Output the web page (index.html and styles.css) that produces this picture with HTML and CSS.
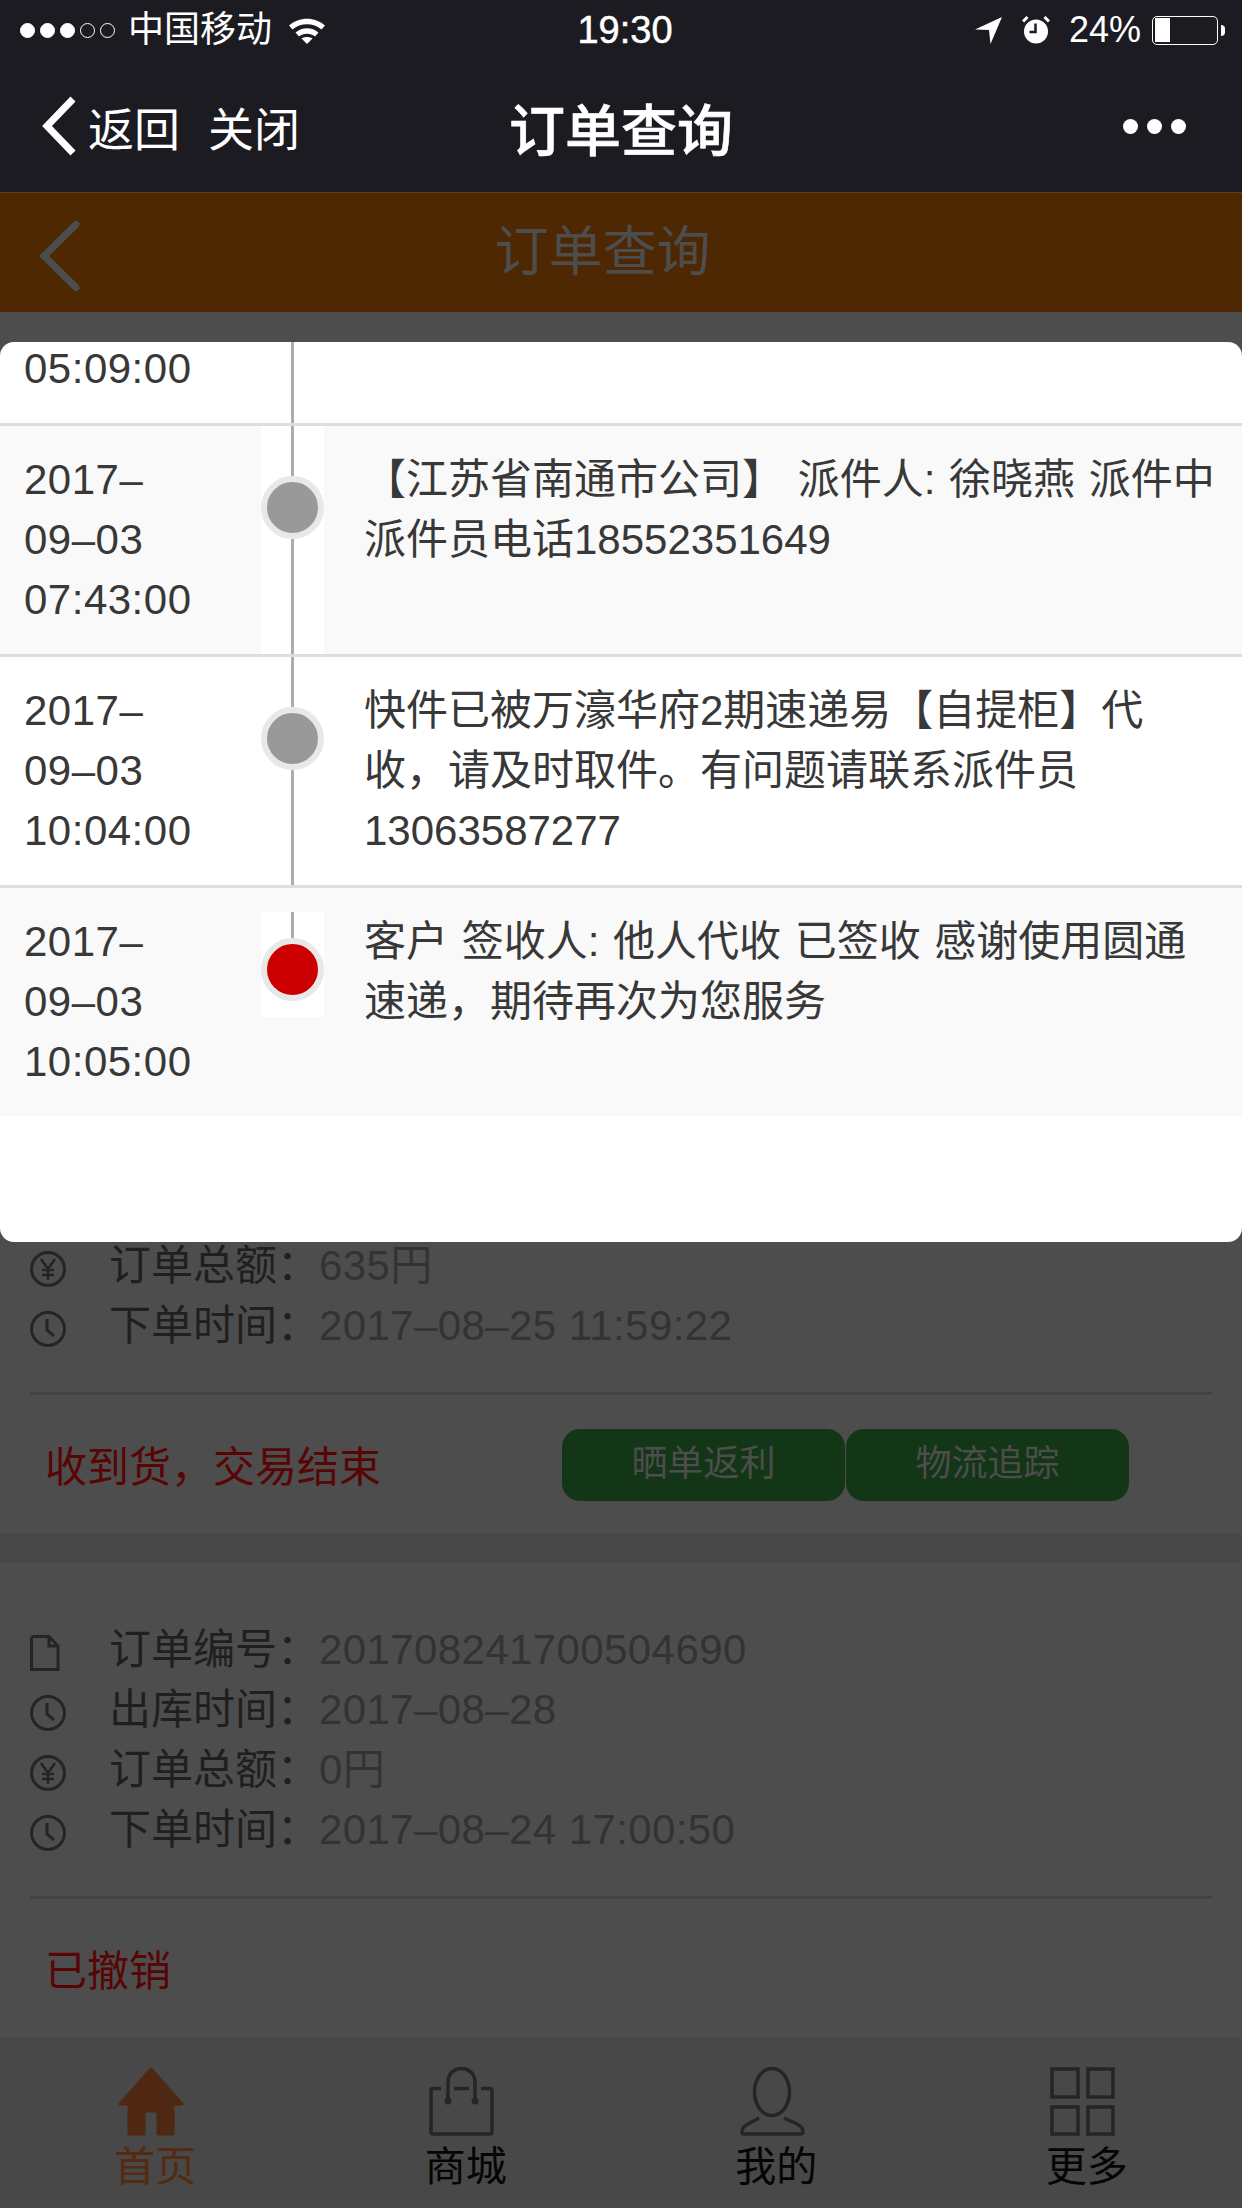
FILE: index.html
```html
<!DOCTYPE html>
<html lang="zh-CN">

<head>
    <meta charset="UTF-8">
    <meta name="viewport" content="width=device-width, initial-scale=1.0">
    <title>订单查询</title>
    <link rel="stylesheet" href="styles.css">
</head>

<body>
    <div class="page">
        <div class="statusbar">
            <div class="status_left">
                <div class="signal">
                    <span class="on"></span><span class="on"></span><span class="on"></span><span></span><span></span>
                </div>
                <span class="carrier">中国移动</span>
                <svg class="wifi" width="38" height="27" viewBox="0 0 38 27">
                    <path d="M1 8.5C11 -0.5 27 -0.5 37 8.5L33.5 12.5C25.500 5.500 12.500 5.500 4.500 12.500Z" fill="#fff" />
                    <path d="M7.500 15.500C14 9.800 24 9.800 30.500 15.500L27 19.500C22.500 15.800 15.500 15.800 11 19.500Z" fill="#fff" />
                    <path d="M13.500 21.500C16.500 19.500 21.500 19.500 24.500 21.500L19 27Z" fill="#fff" />
                </svg>
            </div>
            <div class="clock">19:30</div>
            <div class="status_right">
                <svg width="27" height="27" viewBox="0 0 27 27">
                    <path d="M27 0L15.500 27L14 13L0 12.500Z" fill="#fff" />
                </svg>
                <svg class="alarm" width="28" height="28" viewBox="0 0 28 28">
                    <circle cx="14" cy="15.500" r="12" fill="#fff" />
                    <path d="M13.500 7.500V16H7.500" fill="none" stroke="#1b1b21" stroke-width="2.500" />
                    <path d="M1 5.500L5.500 1M22.500 1L27 5.500" stroke="#fff" stroke-width="3" />
                </svg>
                <span class="percent">24%</span>
                <div class="battery">
                    <div class="battery_fill"></div>
                </div>
                <div class="battery_tip"></div>
            </div>
        </div>

        <div class="nav">
            <div class="nav_left">
                <svg width="34" height="60" viewBox="0 0 34 60">
                    <path d="M31 3L5 30L31 57" fill="none" stroke="#fff" stroke-width="7" />
                </svg>
                <span class="back">返回</span>
                <span>关闭</span>
            </div>
            <div class="nav_title">订单查询</div>
            <div class="more"><span></span><span></span><span></span></div>
        </div>

        <div class="header">
            <svg class="header_back" width="40" height="70" viewBox="0 0 40 70">
                <path d="M36 3.500L4 35L36 66.500" fill="none" stroke="#4d4d4d" stroke-width="7" stroke-linecap="round" />
            </svg>
            <div class="header_title">订单查询</div>
        </div>

        <div class="list">
            <div class="card">
                <div class="info">
                    <svg class="ico" width="36" height="36" viewBox="0 0 36 36">
                        <circle cx="18" cy="18" r="16.500" fill="none" stroke="#252525" stroke-width="3" />
                        <path d="M11 8L18 18L25 8M18 18V29M12 19H24M12 24H24" fill="none" stroke="#252525" stroke-width="2.500" />
                    </svg>
                    <span class="label">订单总额&#65306;</span><span class="value">635円</span>
                </div>
                <div class="info">
                    <svg class="ico" width="36" height="36" viewBox="0 0 36 36">
                        <circle cx="18" cy="18" r="16.500" fill="none" stroke="#252525" stroke-width="3" />
                        <path d="M17 8V19L24 25" fill="none" stroke="#252525" stroke-width="3" />
                    </svg>
                    <span class="label">下单时间&#65306;</span><span class="value">2017–08–25 11:59:22</span>
                </div>
                <div class="divider"></div>
                <div class="state_row">
                    <div class="state">收到货&#65292;交易结束</div>
                    <div class="btn">晒单返利</div>
                    <div class="btn">物流追踪</div>
                </div>
            </div>
            <div class="band"></div>
            <div class="card card_top">
                <div class="info">
                    <svg class="ico" width="36" height="36" viewBox="0 0 36 36">
                        <path d="M1.500 2V34.500H28V11L19 1.500H1.500M19 1.500V11H28" fill="none" stroke="#252525" stroke-width="3" />
                    </svg>
                    <span class="label">订单编号&#65306;</span><span class="value">201708241700504690</span>
                </div>
                <div class="info">
                    <svg class="ico" width="36" height="36" viewBox="0 0 36 36">
                        <circle cx="18" cy="18" r="16.500" fill="none" stroke="#252525" stroke-width="3" />
                        <path d="M17 8V19L24 25" fill="none" stroke="#252525" stroke-width="3" />
                    </svg>
                    <span class="label">出库时间&#65306;</span><span class="value">2017–08–28</span>
                </div>
                <div class="info">
                    <svg class="ico" width="36" height="36" viewBox="0 0 36 36">
                        <circle cx="18" cy="18" r="16.500" fill="none" stroke="#252525" stroke-width="3" />
                        <path d="M11 8L18 18L25 8M18 18V29M12 19H24M12 24H24" fill="none" stroke="#252525" stroke-width="2.500" />
                    </svg>
                    <span class="label">订单总额&#65306;</span><span class="value">0円</span>
                </div>
                <div class="info">
                    <svg class="ico" width="36" height="36" viewBox="0 0 36 36">
                        <circle cx="18" cy="18" r="16.500" fill="none" stroke="#252525" stroke-width="3" />
                        <path d="M17 8V19L24 25" fill="none" stroke="#252525" stroke-width="3" />
                    </svg>
                    <span class="label">下单时间&#65306;</span><span class="value">2017–08–24 17:00:50</span>
                </div>
                <div class="divider"></div>
                <div class="state_row">
                    <div class="state">已撤销</div>
                </div>
            </div>
        </div>

        <div class="tabbar">
            <div class="tab active">
                <svg width="66" height="69" viewBox="0 0 66 69">
                    <path d="M33 2L64 37H55V67H40V44H26V67H11V37H2Z" fill="#4e2813" stroke="#4e2813" stroke-width="3" stroke-linejoin="round" />
                </svg>
                <span>首页</span>
            </div>
            <div class="tab">
                <svg width="65" height="69" viewBox="0 0 65 69">
                    <path d="M12 21.500H4Q2 21.500 2 23.500V65Q2 67 4 67H61Q63 67 63 65V23.500Q63 21.500 61 21.500H52M25 21.500H40" fill="none" stroke="#252525" stroke-width="3.500" />
                    <path d="M19 33V15C19 -3 46 -3 46 15V33" fill="none" stroke="#252525" stroke-width="3.500" />
                    <circle cx="19" cy="34" r="3.500" fill="#252525" />
                    <circle cx="46" cy="34" r="3.500" fill="#252525" />
                </svg>
                <span>商城</span>
            </div>
            <div class="tab">
                <svg width="65" height="69" viewBox="0 0 65 69">
                    <ellipse cx="32" cy="25" rx="17.500" ry="23.500" fill="none" stroke="#252525" stroke-width="3.500" />
                    <path d="M19 51L8 57Q2 60 2 65Q2 67 4 67H60Q63 67 63 65Q63 60 57 57L44 51" fill="none" stroke="#252525" stroke-width="3.500" />
                </svg>
                <span>我的</span>
            </div>
            <div class="tab">
                <svg width="65" height="69" viewBox="0 0 65 69">
                    <g fill="none" stroke="#252525" stroke-width="3.500">
                        <rect x="2" y="2" width="26" height="28" />
                        <rect x="38" y="2" width="25" height="28" />
                        <rect x="2" y="40" width="26" height="27" />
                        <rect x="38" y="40" width="25" height="27" />
                    </g>
                </svg>
                <span>更多</span>
            </div>
        </div>

        <div class="modal">
            <div class="row first">
                <div class="time">05:09:00</div>
                <div class="axis"><div class="line"></div></div>
                <div class="text"></div>
            </div>
            <div class="row odd">
                <div class="time">2017–<br>09–03<br>07:43:00</div>
                <div class="axis">
                    <div class="line top"></div>
                    <div class="dot"></div>
                    <div class="line"></div>
                </div>
                <div class="text">【江苏省南通市公司】 派件人: 徐晓燕 派件中 派件员电话18552351649</div>
            </div>
            <div class="row">
                <div class="time">2017–<br>09–03<br>10:04:00</div>
                <div class="axis">
                    <div class="line top"></div>
                    <div class="dot"></div>
                    <div class="line"></div>
                </div>
                <div class="text">快件已被万濠华府2期速递易【自提柜】代收&#65292;请及时取件。有问题请联系派件员13063587277</div>
            </div>
            <div class="row odd last">
                <div class="time">2017–<br>09–03<br>10:05:00</div>
                <div class="axis">
                    <div class="line"></div>
                    <div class="dot red"></div>
                </div>
                <div class="text">客户 签收人: 他人代收 已签收 感谢使用圆通速递&#65292;期待再次为您服务</div>
            </div>
        </div>
    </div>
</body>

</html>
```

FILE: styles.css
```css
body {
    margin: 0px;
    background-color: #4d4d4d;
}

* {
    font-family: "Liberation Sans", "Noto Sans CJK SC", sans-serif;
    box-sizing: border-box;
}

.page {
    position: relative;
    width: 1242px;
    height: 2208px;
    display: flex;
    flex-direction: column;
    overflow: hidden;
}

.statusbar {
    height: 64px;
    padding: 0px 17px 4px 20px;
    background-color: #1b1b21;
    color: #ffffff;
    display: grid;
    grid-template-columns: 1fr auto 1fr;
    align-items: center;
}

.status_left {
    display: flex;
    align-items: center;
}

.signal {
    display: flex;
    gap: 5px;
}

.signal span {
    width: 15px;
    height: 15px;
    border-radius: 50%;
    border: 1.5px solid #ffffff;
}

.signal .on {
    background-color: #ffffff;
}

.carrier {
    font-size: 36px;
    margin-left: 13px;
    line-height: 40px;
}

.wifi {
    margin-left: 16px;
}

.clock {
    font-size: 38px;
    font-weight: 500;
    margin-left: 5px;
    -webkit-text-stroke: 0.5px #ffffff;
}

.status_right {
    display: flex;
    align-items: center;
    justify-content: flex-end;
}

.alarm {
    margin-left: 20px;
}

.percent {
    font-size: 36px;
    margin-left: 19px;
    margin-right: 11px;
}

.battery {
    width: 66px;
    height: 29px;
    border: 1.5px solid #ffffff;
    border-radius: 5px;
    padding: 1.5px;
}

.battery_fill {
    width: 15px;
    height: 100%;
    background-color: #ffffff;
}

.battery_tip {
    width: 4px;
    height: 11px;
    margin-left: 3px;
    background-color: #ffffff;
    border-radius: 0px 6px 6px 0px;
}

.nav {
    height: 128px;
    padding: 0px 42px 4px 42px;
    background-color: #1b1b21;
    color: #ffffff;
    display: grid;
    grid-template-columns: 1fr auto 1fr;
    align-items: center;
}

.nav_left {
    display: flex;
    align-items: center;
    font-size: 46px;
}

.back {
    margin-left: 12px;
    margin-right: 28px;
}

.nav_title {
    font-size: 56px;
    font-weight: 500;
    -webkit-text-stroke: 0.6px #ffffff;
}

.more {
    display: flex;
    justify-content: flex-end;
    gap: 9px;
    margin-right: 14px;
}

.more span {
    width: 15px;
    height: 15px;
    background-color: #ffffff;
    border-radius: 50%;
}

.header {
    height: 120px;
    padding-left: 40px;
    padding-bottom: 4px;
    background-color: #4e2802;
    border-top: 1px solid #6b3a10;
    display: flex;
    align-items: center;
}

.header_back {
    flex-shrink: 0;
    margin-top: 10px;
}

.header_title {
    font-size: 54px;
    color: #4d4d4d;
    width: 1045px;
    text-align: center;
    padding-bottom: 6px;
}

.list {
    flex: 1;
    min-height: 0;
    display: flex;
    flex-direction: column;
    justify-content: flex-end;
    background-color: #4d4d4d;
}

.card {
    padding: 0px 30px 32px;
    background-color: #4d4d4d;
}

.card_top {
    padding-top: 57px;
}

.band {
    height: 30px;
    background-color: #484848;
}

.info {
    height: 60px;
    display: flex;
    align-items: center;
    font-size: 42px;
    line-height: 60px;
}

.ico {
    width: 36px;
    flex-shrink: 0;
    margin-right: 43px;
    margin-top: 6px;
}

.label {
    color: #1f1f1f;
    width: 210px;
    white-space: nowrap;
}

.value {
    color: #333333;
    letter-spacing: 0.4px;
}

.divider {
    height: 3px;
    margin-top: 36px;
    background-color: #424242;
}

.state_row {
    margin-top: 34px;
    height: 72px;
    display: flex;
    align-items: center;
}

.state {
    width: 532px;
    padding-left: 15px;
    padding-bottom: 3px;
    font-size: 42px;
    color: #580505;
}

.btn {
    width: 283px;
    height: 72px;
    margin-right: 1px;
    border-radius: 18px;
    background-color: #133616;
    color: #4d4d4d;
    font-size: 36px;
    line-height: 70px;
    text-align: center;
}

.tabbar {
    height: 171px;
    padding-top: 30px;
    background-color: #484848;
    display: grid;
    grid-template-columns: repeat(4, 1fr);
}

.tab {
    display: flex;
    flex-direction: column;
    align-items: center;
    font-size: 41px;
    line-height: 50px;
    color: #050505;
}

.tab svg {
    margin-right: 8px;
}

.tab span {
    margin-top: 6px;
}

.tab.active {
    color: #552a10;
}

.modal {
    position: absolute;
    top: 342px;
    left: 0px;
    right: 0px;
    height: 900px;
    background-color: #ffffff;
    border-radius: 14px;
    overflow: hidden;
}

.row {
    height: 231px;
    border-bottom: 3px solid #dddddd;
    display: grid;
    grid-template-columns: 261px 63px 1fr;
    font-size: 42px;
    line-height: 60px;
    color: #383838;
}

.row.first {
    height: 87px;
    margin-top: -3px;
}

.row.odd {
    background-color: #f9f9f9;
}

.row.last {
    height: 228px;
    border-bottom: none;
}

.time {
    padding: 24px 0px 0px 24px;
    letter-spacing: 0.5px;
}

.row.first .time {
    padding-top: 0px;
}

.text {
    padding: 24px 20px 0px 40px;
    word-spacing: 2px;
}

.axis {
    display: flex;
    flex-direction: column;
    align-items: center;
    background-color: #ffffff;
}

.row.last .axis {
    height: 105px;
    margin-top: 24px;
}

.line {
    flex: 1;
    width: 3px;
    background-color: #adadad;
}

.line.top {
    flex: none;
    height: 50px;
}

.dot {
    width: 63px;
    height: 63px;
    flex-shrink: 0;
    border-radius: 50%;
    border: 6px solid #e8e8e8;
    background-color: #999999;
}

.dot.red {
    margin-bottom: 16px;
    background-color: #cc0000;
}
```
